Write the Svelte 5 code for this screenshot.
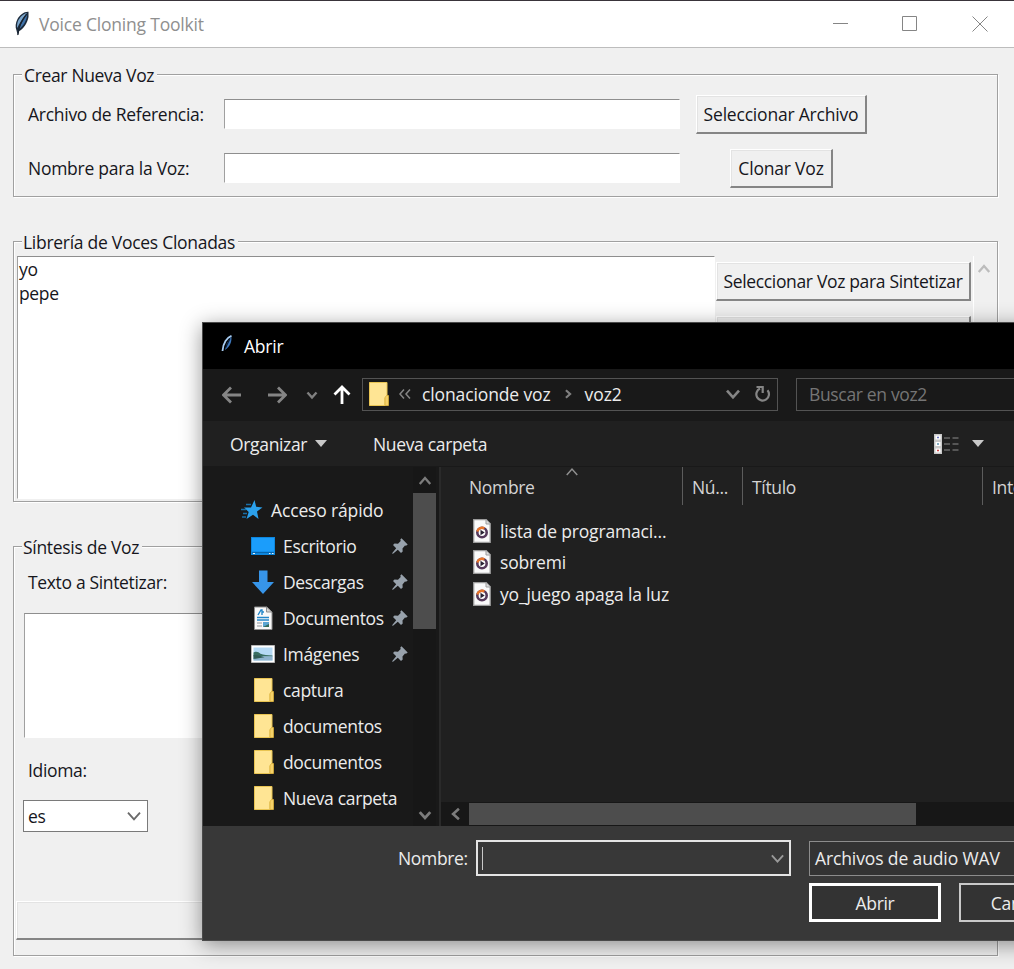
<script>
  const voices = ['yo', 'pepe']
  let selectedLanguage = $state('es')

  const places = [
    { name: 'Escritorio', icon: 'desktop', pinned: true },
    { name: 'Descargas', icon: 'download', pinned: true },
    { name: 'Documentos', icon: 'document', pinned: true },
    { name: 'Imágenes', icon: 'picture', pinned: true },
    { name: 'captura', icon: 'folder' },
    { name: 'documentos', icon: 'folder' },
    { name: 'documentos', icon: 'folder' },
    { name: 'Nueva carpeta', icon: 'folder' },
  ]

  const files = ['lista de programaci...', 'sobremi', 'yo_juego apaga la luz']
</script>

{#snippet chevron(size, dir, color, width)}
  <svg width={size} height={size} viewBox="0 0 12 12" class="chevron {dir}">
    <path d="M1.5 3.5 6 8.500l4.500-5" fill="none" stroke={color} stroke-width={width} />
  </svg>
{/snippet}

{#snippet icon(type)}
  <svg class="icon" width="24" height="24" viewBox="0 0 24 24">
    {#if type === 'folder'}
      <path d="M3.500.5h17.500V14H22v9.500H3.500z" fill="#ffe594" />
      <path d="M3.500.5h17.500V14L19 16v7.500H3.500z" fill="#ffe594" stroke="#e9c452" />
      <path d="M19 23.500V15.500l1.500-2H22.500v10z" fill="#f5d169" stroke="#d9ae38" stroke-width=".8" />
    {:else if type === 'desktop'}
      <path d="M0 3h24v18H0z" fill="#0d86dd" />
      <path d="M1 4h22v13.500H1z" fill="#1b9dfb" />
      <path d="M1 18.500h22" stroke="#0766ae" />
      <path d="M2 19.500h2M18 19.500h1.500M21 19.500h1.500" stroke="#e8f6ff" />
    {:else if type === 'download'}
      <path d="M8 .5h8.500V12H23L12 24 1 12h7z" fill="#3795e9" />
    {:else if type === 'document'}
      <path d="M3.500 1h12L21 6v17.500H3.500z" fill="#f8f8f8" stroke="#8d8d8d" />
      <path d="M15.500 1v5H21z" fill="#d6d6d6" stroke="#8d8d8d" />
      <path d="m7 9 3-5h1v5M11 6h2M6 11.500h12M6 14h12" fill="none" stroke="#2487c9" stroke-width="1.400" />
      <path d="M6 17h5M6 20h5" stroke="#8d9399" stroke-width="1.200" />
      <path d="M12 16h6v5h-6z" fill="#5aa5d2" />
      <path d="m12 21 6-3v3z" fill="#336c58" />
    {:else if type === 'picture'}
      <path d="M.5 3.500h23v17H.5z" fill="#fff" stroke="#b7b7b7" />
      <path d="M2.500 5.500h19v13h-19z" fill="#b5daf5" />
      <path d="M2.500 10.500c3-1.500 5-.5 7 1.300 3 1.500 7 1.200 12 1.700v1h-19z" fill="#396e62" />
      <path d="M2.500 14.500h19v4h-19z" fill="#8fb4cf" />
      <path d="M2.500 13c5 .2 8 1 11 2.300l-11 1.700z" fill="#315c55" />
    {/if}
  </svg>
{/snippet}

<div class="window">
  <header class="titlebar">
    <svg width="16" height="25" viewBox="0 0 16 25">
      <path d="M14.500.8C10 .5 6 4 3.500 8 1.500 12 1 16 2.500 19.500l1.300 5 1.400-4.500C9 18.500 13.500 12 14.500 6z" fill="#1d2b3c" />
      <path d="M13 2C9.500 2.500 6 6 4 10c-1 3-1.200 5-.8 7C5 13 8.500 7 13 2z" fill="#7ba6cd" />
      <path d="M13.300 3.500C12.500 9.500 9.500 15 5 18c1.500-4.500 5-10 8.300-14.500z" fill="#3f73ab" />
      <path d="M12.500 3C8.500 8 5 14 3.900 24" fill="none" stroke="#18222e" stroke-width="1.100" />
    </svg>
    <h1>Voice Cloning Toolkit</h1>
    <div class="controls">
      <svg width="16" height="16" viewBox="0 0 16 16"><path d="M1 7.500h15" /></svg>
      <svg width="16" height="16" viewBox="0 0 16 16"><path d="M.5.5h14v14H.5z" /></svg>
      <svg width="16" height="16" viewBox="0 0 16 16"><path d="m.5.5 15 15m0-15-15 15" /></svg>
    </div>
  </header>

  <main>
    <section class="group create">
      <h2>Crear Nueva Voz</h2>
      <div class="form">
        <label for="ref">Archivo de Referencia:</label>
        <input id="ref" class="sunken" type="text" />
        <button class="raised">Seleccionar Archivo</button>
        <label for="name">Nombre para la Voz:</label>
        <input id="name" class="sunken" type="text" />
        <button class="raised">Clonar Voz</button>
      </div>
    </section>

    <section class="group library">
      <h2>Librería de Voces Clonadas</h2>
      <div class="library-body">
        <ul class="sunken voices">
          {#each voices as voice}
            <li>{voice}</li>
          {/each}
        </ul>
        <div class="voice-actions">
          <button class="raised">Seleccionar Voz para Sintetizar</button>
          <button class="raised" aria-label="Eliminar"></button>
        </div>
        <div class="scroll-up">{@render chevron(14, 'up', '#bcbcbc', 2)}</div>
      </div>
    </section>

    <section class="group synthesis">
      <h2>Síntesis de Voz</h2>
      <label class="text-label" for="text">Texto a Sintetizar:</label>
      <textarea id="text" class="sunken"></textarea>
      <span class="lang-label">Idioma:</span>
      <button class="combo">
        {selectedLanguage}
        {@render chevron(16, 'down', '#6a6a6a', 1.4)}
      </button>
      <button class="raised wide" aria-label="Sintetizar"></button>
    </section>
  </main>

  <div class="dialog" role="dialog" aria-label="Abrir">
    <div class="dialog-title">
      <svg width="12" height="18" viewBox="0 0 12 18">
        <path d="M10.500.8C6 2.500 2 8 1.500 16" fill="none" stroke="#a8cdf2" stroke-width="1.800" />
        <path d="M10.300 1.500c.8 5-1.500 10.500-6.300 13.500L6 8z" fill="#3d78bd" />
        <path d="M9 3.500 4.500 13" stroke="#081c35" stroke-width="1.200" />
      </svg>
      <span>Abrir</span>
    </div>

    <div class="nav">
      <svg class="arrow" width="20" height="20" viewBox="0 0 20 20"><path d="M19 10H2M9 2.500 1.500 10 9 17.500" /></svg>
      <svg class="arrow" width="20" height="20" viewBox="0 0 20 20"><path d="M1 10h17M11 2.500l7.500 7.500-7.500 7.500" /></svg>
      <span class="recent">{@render chevron(12, 'down', '#808080', 2.4)}</span>
      <svg class="arrow bright" width="20" height="20" viewBox="0 0 20 20"><path d="M10 19V2M2.500 9.500 10 2l7.500 7.500" /></svg>
      <div class="address">
        {@render icon('folder')}
        <svg class="crumbs" width="14" height="12" viewBox="0 0 14 12"><path d="M6 1.500 2 6l4 4.500M12 1.500 8 6l4 4.500" /></svg>
        <span class="crumb">clonacionde voz</span>
        <span class="sep">{@render chevron(10, 'right', '#808080', 2.6)}</span>
        <span class="crumb last">voz2</span>
        <span class="address-drop">{@render chevron(16, 'down', '#858585', 2)}</span>
        <svg class="refresh" width="18" height="18" viewBox="0 0 18 18">
          <path d="M13.500 5.200A6.300 6.300 0 1 1 6 3.500" />
          <path d="M2.500 2h6.200v6" />
        </svg>
      </div>
      <div class="search">Buscar en voz2</div>
    </div>

    <div class="toolbar">
      <span class="organize">Organizar</span>
      <i class="triangle"></i>
      <span class="new-folder">Nueva carpeta</span>
      <svg class="view" width="25" height="20" viewBox="0 0 25 20">
        <path d="M0 0h8v20H0z" fill="#c9c9c9" />
        <path d="M1.500 1.500h5v4h-5zM1.500 8h5v4h-5zM1.500 14.500h5v4h-5z" fill="#fff" />
        <path d="M3 3.500h2" stroke="#6b74c0" stroke-width="1.500" />
        <path d="M3 10h2" stroke="#5f93b0" stroke-width="1.500" />
        <path d="M3 16.500h2" stroke="#d04848" stroke-width="1.500" />
        <path d="M10 4h6M18.500 4h6M10 10h6M18.500 10h6M10 16h6M18.500 16h6" stroke="#8b8b8b" />
      </svg>
      <i class="triangle"></i>
    </div>

    <div class="browser">
      <nav class="places">
        <div class="place root">
          <svg width="22" height="20" viewBox="0 0 22 20">
            <path d="m13.500 0 1.700 6.800 6.300.6-5.500 4 1.500 7.600-5.500-4.200L5.500 19l2.200-7L3 7.500h7z" fill="#2ba1ec" />
            <path d="M5 4.500h5M0 9.500h5M2 13.500h4M1 17h4" stroke="#1a6fa8" stroke-width="1.300" />
          </svg>
          <span>Acceso rápido</span>
        </div>
        {#each places as place}
          <div class="place">
            {@render icon(place.icon)}
            <span>{place.name}</span>
            {#if place.pinned}
              <svg class="pin" width="16" height="16" viewBox="0 0 16 16">
                <path d="m9.500.3 6.200 6.200-1.700 1.300-1-.2-2.500 2.900.2 3-1.700 1.500-3.200-3.200L1 15.700H.3V15L4.200 10.200 1 7l1.500-1.500 3.500.3L8.700 3l-.4-1.500z" fill="#98a2ac" />
              </svg>
            {/if}
          </div>
        {/each}
      </nav>
      <div class="vscroll">
        {@render chevron(14, 'up', '#7c7c7c', 2)}
        <div class="vthumb"></div>
        {@render chevron(14, 'down', '#7c7c7c', 2.4)}
      </div>

      <div class="content">
        <div class="columns">
          <span class="sort">{@render chevron(14, 'up', '#8f8f8f', 1.3)}</span>
          <span class="col name">Nombre</span>
          <span class="col number">Nú...</span>
          <span class="col title">Título</span>
          <span class="col artist">Intérpretes</span>
        </div>
        <div class="files">
          {#each files as file}
            <div class="file">
              <svg width="18" height="24" viewBox="0 0 18 24">
                <path d="M.7.7h12.500l4 4v18.600H.7z" fill="#fafafa" stroke="#9c9c9c" stroke-width="1.300" />
                <path d="M13 .7v4.300h4.300" fill="#ddd" stroke="#9c9c9c" />
                <circle cx="9" cy="13.500" r="4.700" fill="#fff" stroke="#563a5b" stroke-width="2.600" />
                <path d="M4.400 12.500a4.700 4.700 0 0 1 7-3.100" fill="none" stroke="#e8752b" stroke-width="2.400" />
                <path d="m7.500 10.800 4.200 2.700-4.200 2.700z" fill="#292233" />
              </svg>
              <span>{file}</span>
            </div>
          {/each}
        </div>
        <div class="hscroll">
          <span class="hprev">{@render chevron(14, 'left', '#7c7c7c', 2.2)}</span>
          <div class="hthumb"></div>
        </div>
      </div>
    </div>

    <div class="footer">
      <div class="footer-row">
        <span class="name-label">Nombre:</span>
        <div class="filename">
          <i class="caret"></i>
          {@render chevron(15, 'down', '#9a9a9a', 1.5)}
        </div>
        <div class="filter">Archivos de audio WAV</div>
      </div>
      <div class="footer-row actions">
        <button class="primary">Abrir</button>
        <button>Cancelar</button>
      </div>
    </div>
  </div>
</div>

<style>
  :global(body) {
    margin: 0;
    overflow: hidden;
  }

  .window {
    position: relative;
    display: flex;
    flex-direction: column;
    box-sizing: border-box;
    width: 1014px;
    height: 969px;
    overflow: hidden;
    border-top: 1px solid #39343a;
    background: #f0f0f0;
    color: #16161c;
    font-family: 'Open Sans', 'Noto Sans', sans-serif;
    font-size: 17.5px;
    line-height: 24px;
    letter-spacing: -0.34px;
    white-space: nowrap;
  }

  .window *,
  .window *::before {
    box-sizing: border-box;
  }

  svg {
    display: block;
    flex-shrink: 0;
  }

  h1,
  h2,
  ul {
    margin: 0;
    padding: 0;
    font: inherit;
    list-style: none;
  }

  button,
  input,
  textarea {
    font: inherit;
    letter-spacing: inherit;
    color: inherit;
    border-radius: 0;
    resize: none;
    outline: none;
  }

  .chevron.up {
    transform: rotate(180deg);
  }

  .chevron.left {
    transform: rotate(90deg);
  }

  .chevron.right {
    transform: rotate(-90deg);
  }

  .titlebar {
    display: flex;
    align-items: center;
    height: 47px;
    padding: 0 26px 0 14px;
    border-bottom: 1px solid #bdbdbd;
    background: #fff;
    color: #8f8f8f;
  }

  .titlebar > svg {
    margin-top: -2px;
  }

  .titlebar h1 {
    margin-left: 9px;
    letter-spacing: -0.2px;
  }

  .controls {
    display: flex;
    gap: 54px;
    margin-left: auto;
  }

  .controls path {
    fill: none;
    stroke: #858585;
  }

  main {
    padding: 26px 15px 0 13px;
  }

  .group {
    width: 985px;
    border: 1px solid #a0a0a0;
    box-shadow: 1px 1px 0 #fff, inset 1px 1px 0 #fff;
  }

  .group h2 {
    width: fit-content;
    height: 24px;
    margin: -12px 0 0 8px;
    padding: 0 3px 0 2px;
    background: #f0f0f0;
  }

  .create {
    height: 123px;
  }

  .library {
    height: 261px;
    margin-top: 44px;
  }

  .library h2,
  .synthesis h2 {
    margin-top: -12.5px;
    padding-left: 1px;
    letter-spacing: -0.28px;
  }

  .synthesis h2 {
    letter-spacing: -0.3px;
  }

  .synthesis {
    display: flex;
    flex-direction: column;
    align-items: flex-start;
    height: 410px;
    margin-top: 44px;
  }

  .sunken {
    border: 1px solid #fff;
    border-top-color: #8e8e8e;
    border-left-color: #a0a0a0;
    background: #fff;
  }

  .raised {
    height: 39px;
    padding: 0 6px;
    border: solid;
    border-width: 1px 2px 2px 1px;
    border-color: #fff #858585 #858585 #fff;
    background: #f0f0f0;
    box-shadow: inset 1px 1px 0 #e3e3e3;
  }

  .form {
    display: grid;
    grid-template-columns: 196px 456px 15px 173px;
    grid-auto-rows: 54px;
    align-items: center;
    padding-left: 14px;
  }

  .form label {
    grid-column: 1;
    letter-spacing: -0.27px;
  }

  .form input {
    height: 30px;
  }

  .form .raised {
    grid-column: 4;
    justify-self: center;
    margin-top: 1px;
    padding: 0 7px;
    letter-spacing: -0.2px;
  }

  .library-body {
    display: flex;
    margin: 2.5px 0 0 3px;
  }

  .voices {
    width: 698px;
    height: 243px;
  }

  .voices li {
    padding-left: 1px;
  }

  .voice-actions {
    display: flex;
    flex-direction: column;
    gap: 15px;
    width: 259px;
    padding: 6px 2px 0 1px;
    border-right: 1px solid #fff;
  }

  .scroll-up {
    padding: 6px 0 0 3px;
  }

  .text-label {
    margin: 11.5px 0 0 14px;
  }

  .synthesis textarea {
    width: 900px;
    height: 125px;
    margin: 19px 0 0 10px;
  }

  .lang-label {
    margin: 20px 0 0 14px;
  }

  .combo {
    display: flex;
    align-items: center;
    justify-content: space-between;
    width: 125px;
    height: 32px;
    margin: 18px 0 0 9px;
    padding: 0 5px 0 4px;
    border: 1px solid #7a7a7a;
    background: #fff;
  }

  .wide {
    width: 979px;
    margin: 69px 0 0 2px;
  }

  .dialog {
    position: absolute;
    top: 321px;
    left: 202px;
    display: flex;
    flex-direction: column;
    width: 900px;
    height: 619px;
    border: 1px solid #4a4a4a;
    background: #191919;
    box-shadow: 0 4px 20px rgba(0, 0, 0, 0.42);
    color: #ececec;
  }

  .dialog-title {
    display: flex;
    align-items: center;
    height: 46px;
    padding-left: 18px;
    background: #000;
    color: #fff;
  }

  .dialog-title span {
    margin-left: 11px;
    letter-spacing: -0.2px;
  }

  .dialog-title svg {
    margin-top: -4px;
  }

  .nav {
    display: flex;
    align-items: center;
    height: 52px;
    padding: 0 0 1px 19px;
  }

  .arrow {
    margin-right: 25px;
  }

  .arrow path {
    fill: none;
    stroke: #858585;
    stroke-width: 2.8;
  }

  .arrow.bright {
    margin-right: 10px;
  }

  .arrow.bright path {
    stroke: #fff;
  }

  .recent {
    width: 12px;
    margin: 0 14px 0 -6px;
  }

  .address,
  .search {
    display: flex;
    align-items: center;
    height: 33px;
    padding-bottom: 1px;
    border: 1px solid #535353;
  }

  .address {
    width: 416px;
    padding-left: 3px;
  }

  .crumbs {
    margin-left: 8px;
  }

  .crumbs path {
    fill: none;
    stroke: #858585;
    stroke-width: 1.5;
  }

  .crumb {
    margin-left: 10px;
    letter-spacing: -0.12px;
  }

  .sep {
    margin-left: 12px;
  }

  .crumb.last {
    margin-left: 12px;
  }

  .address-drop {
    margin-left: auto;
  }

  .refresh {
    margin: 0 5px 0 13px;
  }

  .refresh path {
    fill: none;
    stroke: #858585;
    stroke-width: 2.2;
  }

  .search {
    width: 280px;
    margin-left: 18px;
    padding-left: 12px;
    color: #757575;
  }

  .toolbar {
    display: flex;
    align-items: center;
    height: 45px;
    padding-left: 27px;
    background: #202020;
  }

  .triangle {
    border: 6.5px solid transparent;
    border-top: 7px solid #c9c9c9;
    border-bottom: 0;
  }

  .organize {
    width: 85px;
  }

  .new-folder {
    width: 561px;
    margin-left: 46px;
  }

  .view {
    margin-right: 13px;
  }

  .browser {
    display: flex;
    height: 360px;
    border-top: 1px solid #191919;
  }

  .places {
    width: 210px;
    padding-top: 25px;
  }

  .place {
    display: flex;
    align-items: center;
    height: 36px;
    padding-left: 48px;
  }

  .place span {
    width: 106px;
    margin-left: 8px;
  }

  .place.root {
    padding-left: 38px;
  }

  .place.root span {
    letter-spacing: -0.15px;
  }

  .pin {
    margin-left: 3px;
  }

  .vscroll {
    display: flex;
    flex-direction: column;
    align-items: center;
    width: 23px;
    padding: 7px 0 4px;
    background: #171717;
  }

  .vthumb {
    width: 23px;
    height: 136px;
    margin: 5px 0 auto;
    background: #4d4d4d;
  }

  .content {
    display: flex;
    flex-direction: column;
    flex: 1;
    margin-left: 3px;
    border-left: 2px solid #2a2a2a;
    background: #202020;
  }

  .columns {
    position: relative;
    display: flex;
    height: 38px;
    color: #d4d4d4;
  }

  .sort {
    position: absolute;
    top: -2px;
    left: 124px;
  }

  .col {
    padding: 8px 0 0 9px;
    border-right: 1px solid #5c5c5c;
  }

  .col.name {
    width: 242px;
    padding-left: 28px;
  }

  .col.number {
    width: 60px;
  }

  .col.title {
    width: 240px;
  }

  .files {
    flex: 1;
    padding-top: 10px;
    letter-spacing: -0.17px;
  }

  .file {
    display: flex;
    align-items: center;
    height: 31.5px;
    padding-left: 32px;
  }

  .file span {
    margin-left: 9px;
  }

  .hscroll {
    display: flex;
    height: 24px;
    padding-top: 1px;
    background: #171717;
  }

  .hprev {
    width: 28px;
    padding: 4px 0 0 8px;
  }

  .hthumb {
    width: 447px;
    height: 22px;
    background: #4d4d4d;
  }

  .footer {
    flex: 1;
    padding: 14px 0 0;
    background: #383838;
  }

  .footer-row {
    display: flex;
    align-items: center;
  }

  .name-label {
    width: 78px;
    margin-left: 195px;
  }

  .filename {
    display: flex;
    align-items: center;
    justify-content: space-between;
    width: 315px;
    height: 36px;
    padding: 0 4px;
    border: 2px solid #e4e4e4;
  }

  .caret {
    width: 1px;
    height: 23px;
    background: #c8c8c8;
  }

  .filter {
    width: 280px;
    height: 35px;
    margin-left: 18px;
    padding: 4px 5px;
    border: 1px solid #8c8c8c;
    background: #333;
    letter-spacing: -0.12px;
  }

  .actions {
    gap: 18px;
    margin: 7px 0 0 606px;
  }

  .actions button {
    width: 132px;
    height: 39px;
    border: 2px solid #c9c9c9;
    background: #333;
  }

  .actions .primary {
    border: 3px solid #fff;
  }
</style>
